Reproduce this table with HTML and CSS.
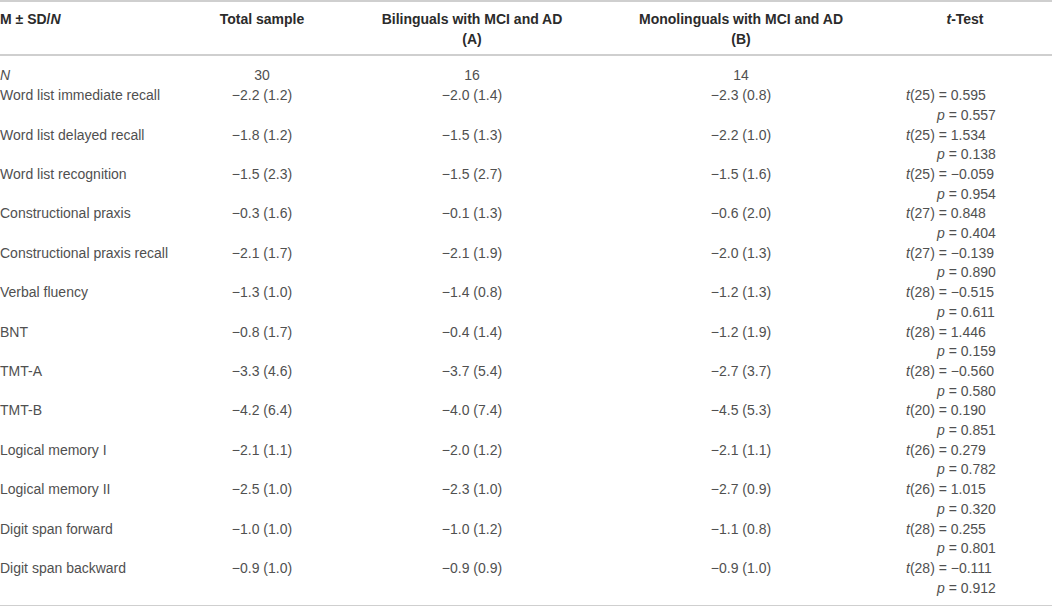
FILE: index.html
```html
<!DOCTYPE html>
<html lang="en">
<head>
    <meta charset="UTF-8">
    <title>Cognitive test scores</title>
    <link rel="stylesheet" href="styles.css">
</head>
<body>
    <table class="scores">
        <colgroup>
            <col class="c-label">
            <col class="c-total">
            <col class="c-bi">
            <col class="c-mono">
            <col class="c-test">
        </colgroup>
        <thead>
            <tr>
                <th class="label">M ± SD/<i>N</i></th>
                <th>Total sample<br>&nbsp;</th>
                <th>Bilinguals with MCI and AD<br>(A)</th>
                <th>Monolinguals with MCI and AD<br>(B)</th>
                <th class="test-head"><i>t</i>-Test<br>&nbsp;</th>
            </tr>
        </thead>
        <tbody>
            <tr class="n-row">
                <td class="label"><i>N</i></td>
                <td>30</td>
                <td>16</td>
                <td>14</td>
                <td></td>
            </tr>
            <tr><td class="label">Word list immediate recall</td><td>−2.2 (1.2)</td><td>−2.0 (1.4)</td><td>−2.3 (0.8)</td><td class="test"><span class="t"><i>t</i>(25) = 0.595</span><span class="p"><i>p</i> = 0.557</span></td></tr>
            <tr><td class="label">Word list delayed recall</td><td>−1.8 (1.2)</td><td>−1.5 (1.3)</td><td>−2.2 (1.0)</td><td class="test"><span class="t"><i>t</i>(25) = 1.534</span><span class="p"><i>p</i> = 0.138</span></td></tr>
            <tr><td class="label">Word list recognition</td><td>−1.5 (2.3)</td><td>−1.5 (2.7)</td><td>−1.5 (1.6)</td><td class="test"><span class="t"><i>t</i>(25) = −0.059</span><span class="p"><i>p</i> = 0.954</span></td></tr>
            <tr><td class="label">Constructional praxis</td><td>−0.3 (1.6)</td><td>−0.1 (1.3)</td><td>−0.6 (2.0)</td><td class="test"><span class="t"><i>t</i>(27) = 0.848</span><span class="p"><i>p</i> = 0.404</span></td></tr>
            <tr><td class="label">Constructional praxis recall</td><td>−2.1 (1.7)</td><td>−2.1 (1.9)</td><td>−2.0 (1.3)</td><td class="test"><span class="t"><i>t</i>(27) = −0.139</span><span class="p"><i>p</i> = 0.890</span></td></tr>
            <tr><td class="label">Verbal fluency</td><td>−1.3 (1.0)</td><td>−1.4 (0.8)</td><td>−1.2 (1.3)</td><td class="test"><span class="t"><i>t</i>(28) = −0.515</span><span class="p"><i>p</i> = 0.611</span></td></tr>
            <tr><td class="label">BNT</td><td>−0.8 (1.7)</td><td>−0.4 (1.4)</td><td>−1.2 (1.9)</td><td class="test"><span class="t"><i>t</i>(28) = 1.446</span><span class="p"><i>p</i> = 0.159</span></td></tr>
            <tr><td class="label">TMT-A</td><td>−3.3 (4.6)</td><td>−3.7 (5.4)</td><td>−2.7 (3.7)</td><td class="test"><span class="t"><i>t</i>(28) = −0.560</span><span class="p"><i>p</i> = 0.580</span></td></tr>
            <tr><td class="label">TMT-B</td><td>−4.2 (6.4)</td><td>−4.0 (7.4)</td><td>−4.5 (5.3)</td><td class="test"><span class="t"><i>t</i>(20) = 0.190</span><span class="p"><i>p</i> = 0.851</span></td></tr>
            <tr><td class="label">Logical memory I</td><td>−2.1 (1.1)</td><td>−2.0 (1.2)</td><td>−2.1 (1.1)</td><td class="test"><span class="t"><i>t</i>(26) = 0.279</span><span class="p"><i>p</i> = 0.782</span></td></tr>
            <tr><td class="label">Logical memory II</td><td>−2.5 (1.0)</td><td>−2.3 (1.0)</td><td>−2.7 (0.9)</td><td class="test"><span class="t"><i>t</i>(26) = 1.015</span><span class="p"><i>p</i> = 0.320</span></td></tr>
            <tr><td class="label">Digit span forward</td><td>−1.0 (1.0)</td><td>−1.0 (1.2)</td><td>−1.1 (0.8)</td><td class="test"><span class="t"><i>t</i>(28) = 0.255</span><span class="p"><i>p</i> = 0.801</span></td></tr>
            <tr class="last-row"><td class="label">Digit span backward</td><td>−0.9 (1.0)</td><td>−0.9 (0.9)</td><td>−0.9 (1.0)</td><td class="test"><span class="t"><i>t</i>(28) = −0.111</span><span class="p"><i>p</i> = 0.912</span></td></tr>
        </tbody>
    </table>
</body>
</html>
```

FILE: styles.css
```css
body {
    margin: 0;
    background: #fff;
    font-family: "Liberation Sans", Arial, sans-serif;
    font-size: 14px;
    color: #505050;
}

.scores {
    width: 1052px;
    border-collapse: collapse;
    table-layout: fixed;
    border-top: 2px solid #cfcfcf;
    border-bottom: 2px solid #cfcfcf;
}

.c-label { width: 200px; }
.c-total { width: 124px; }
.c-bi { width: 296px; }
.c-mono { width: 242px; }
.c-test { width: 190px; }

.scores th,
.scores td {
    padding: 0;
    line-height: 19.7px;
    text-align: center;
    vertical-align: top;
    white-space: nowrap;
}

.scores th {
    font-weight: bold;
    color: #2b2b2b;
    padding: 8px 0 5px;
    border-bottom: 2px solid #cfcfcf;
}

.scores th.label,
.scores td.label {
    text-align: left;
}

.scores th.test-head {
    padding-left: 16px;
}

.n-row td {
    padding-top: 10px;
}

.scores td.test {
    text-align: left;
    padding-left: 44px;
}

.test .t,
.test .p {
    display: block;
}

.test .p {
    padding-left: 31px;
}

.last-row td {
    padding-bottom: 7px;
}

.scores td:not(.test) {
    height: 39.4px;
}

.n-row td:not(.test) {
    height: auto;
}
```
